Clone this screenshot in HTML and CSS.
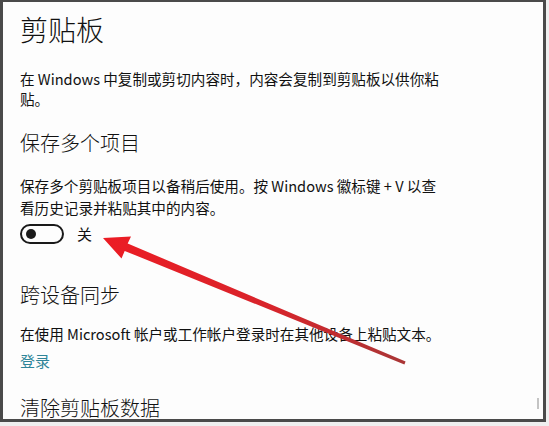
FILE: index.html
```html
<!DOCTYPE html>
<html lang="zh-CN">
<head>
<meta charset="utf-8">
<title>剪贴板</title>
<link rel="stylesheet" href="styles.css">
</head>
<body>
<div class="frame">
  <h1 class="title">剪贴板</h1>
  <p class="desc desc-tight">在 Windows 中复制或剪切内容时，内容会复制到剪贴板以供你粘<br>贴。</p>

  <h2 class="heading heading-first">保存多个项目</h2>
  <p class="desc desc-wide">保存多个剪贴板项目以备稍后使用。按 Windows 徽标键 + V 以查<br>看历史记录并粘贴其中的内容。</p>
  <div class="toggle-row">
    <span class="toggle"><span class="knob"></span></span>
    <span class="toggle-label">关</span>
  </div>

  <h2 class="heading heading-sync">跨设备同步</h2>
  <p class="desc desc-sync">在使用 Microsoft 帐户或工作帐户登录时在其他设备上粘贴文本。</p>
  <a class="link">登录</a>

  <h2 class="heading heading-clear">清除剪贴板数据</h2>

  <span class="scroll-thumb"></span>

  <svg class="arrow" width="549" height="426" viewBox="0 0 549 426" xmlns="http://www.w3.org/2000/svg">
    <defs>
      <linearGradient id="ag" x1="103" y1="238" x2="405" y2="363" gradientUnits="userSpaceOnUse">
        <stop offset="0" stop-color="#ec1c24"/>
        <stop offset="0.55" stop-color="#d8242b"/>
        <stop offset="1" stop-color="#a93636"/>
      </linearGradient>
    </defs>
    <polygon fill="url(#ag)" points="103,238 131,236.5 127.7,243.5 405.6,361.6 404.4,364.4 124.7,250.9 121.5,258.5"/>
  </svg>
</div>
</body>
</html>
```

FILE: styles.css
```css
html, body {
  margin: 0;
  padding: 0;
}

body {
  background: #efefef;
  width: 549px;
  height: 426px;
  overflow: hidden;
  font-family: "Noto Sans CJK SC", "Noto Sans", sans-serif;
  color: #111;
}

.frame {
  position: relative;
  box-sizing: border-box;
  width: 546px;
  height: 422px;
  background: #fdfdfd;
  border-style: solid;
  border-color: #4a4a4a;
  border-width: 2px 3px 3px 3px;
  padding: 9px 0 0 17px;
  overflow: hidden;
}

.title {
  margin: 0;
  font-size: 28px;
  font-weight: 300;
  line-height: 36px;
  color: #111;
}

.desc {
  margin: 0;
  font-size: 14.6px;
  font-weight: 400;
  color: #111;
}

.desc-tight {
  margin-top: 22px;
  line-height: 20px;
}

.heading {
  margin: 0;
  font-size: 20px;
  font-weight: 300;
  line-height: 28px;
  color: #111;
}

.heading-first {
  margin-top: 20px;
}

.desc-wide {
  margin-top: 18px;
  line-height: 22px;
}

.toggle-row {
  display: flex;
  align-items: center;
  gap: 13px;
  margin-top: 5px;
  height: 20px;
}

.toggle {
  box-sizing: border-box;
  width: 44px;
  height: 20px;
  border: 2px solid #1a1a1a;
  border-radius: 10px;
  display: flex;
  align-items: center;
  padding-left: 4px;
}

.knob {
  width: 10px;
  height: 10px;
  border-radius: 50%;
  background: #1a1a1a;
}

.toggle-label {
  font-size: 15px;
  line-height: 20px;
}

.heading-sync {
  margin-top: 37px;
}

.desc-sync {
  margin-top: 14px;
  line-height: 22px;
}

.link {
  display: block;
  margin-top: 5px;
  font-size: 15px;
  line-height: 22px;
  color: #2f8599;
}

.heading-clear {
  margin-top: 22px;
}

.scroll-thumb {
  position: absolute;
  right: 4px;
  top: 396px;
  width: 2px;
  height: 11px;
  background: #c4c4c4;
}

.arrow {
  position: absolute;
  left: -3px;
  top: -2px;
  pointer-events: none;
}
```
